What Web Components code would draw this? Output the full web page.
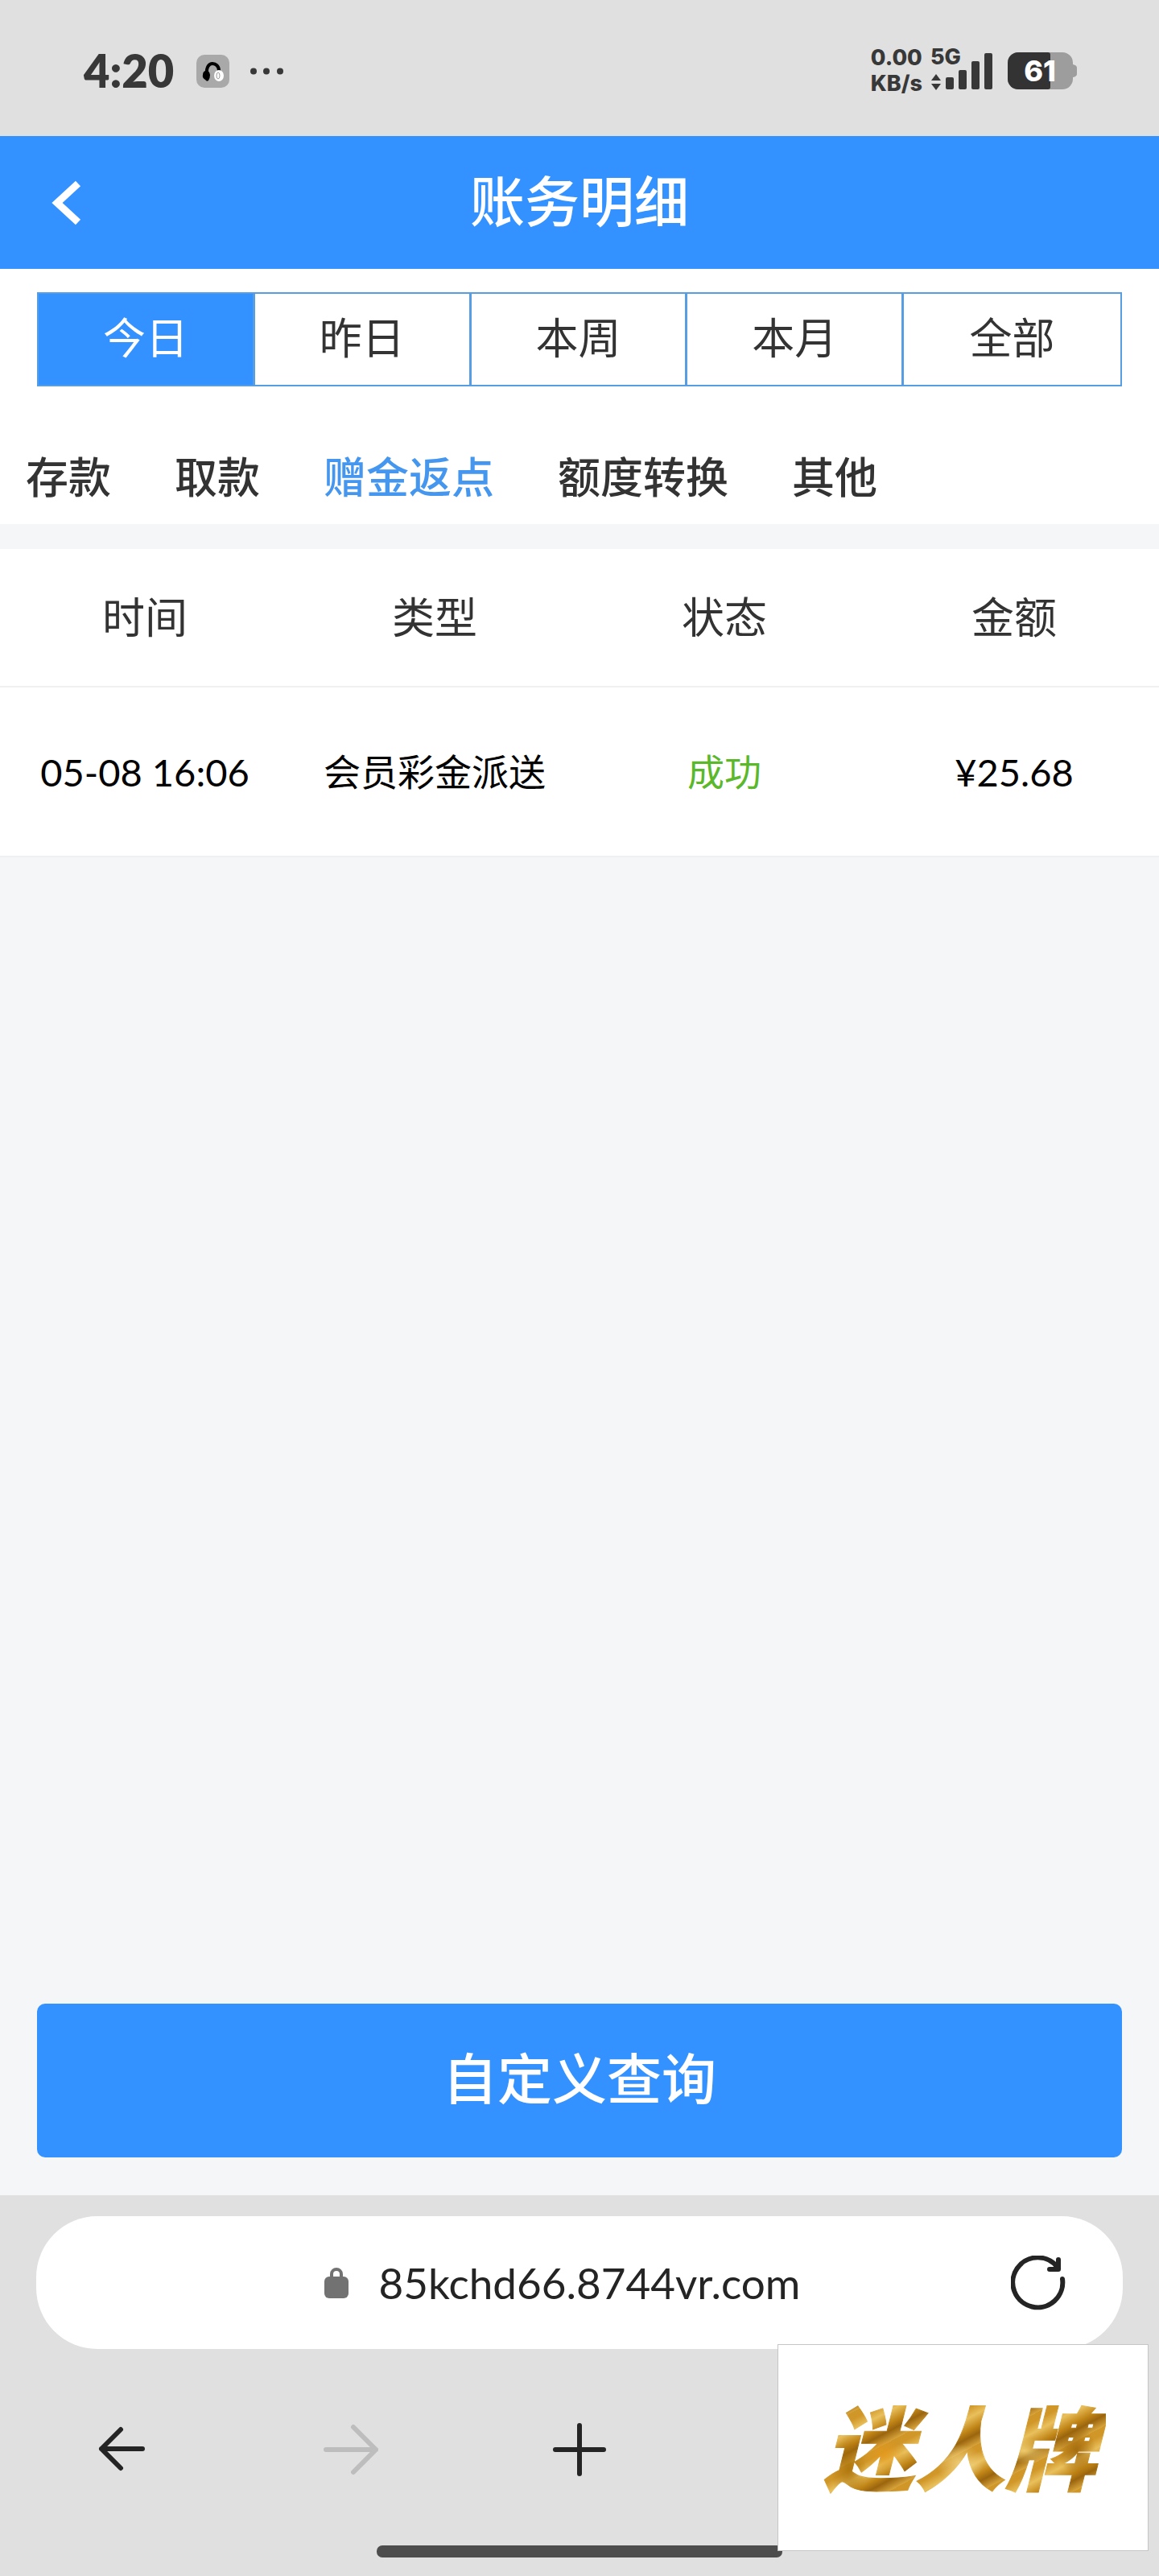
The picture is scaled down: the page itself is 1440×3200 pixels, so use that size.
<!DOCTYPE html>
<html lang="zh-CN">
<head>
<meta charset="utf-8">
<meta name="viewport" content="width=device-width, initial-scale=1">
<title>账务明细</title>
<style>
  :root {
    --blue: #3392ff;
    --ink: #333;
    --chrome: #e0e0e0;
    --canvas: #f4f6f8;
    --gutter: 46px;
  }
  html, body { height: 100%; }
  body {
    margin: 0;
    background: var(--canvas);
    color: var(--ink);
    font-family: Lato, "Noto Sans CJK SC", sans-serif;
  }
</style>
</head>
<body>
<account-app></account-app>

<script>
const define = (name, html, setup) => {
  const template = document.createElement('template');
  template.innerHTML = `<style>
    *, *::before, *::after { box-sizing: border-box; }
    button { margin: 0; padding: 0; border: 0; background: none; color: inherit; font: inherit; cursor: pointer; }
    svg { display: block; }
  </style>` + html;
  customElements.define(name, class extends HTMLElement {
    constructor() {
      super();
      this.attachShadow({ mode: 'open' }).append(template.content.cloneNode(true));
    }
    connectedCallback() { if (setup) setup(this.shadowRoot, this); }
  });
};

/* Moves the pressed state to whichever button of a group was tapped. */
const singleChoice = root => {
  const buttons = [...root.querySelectorAll('button')];
  buttons.forEach(b => b.addEventListener('click', () =>
    buttons.forEach(o => o.setAttribute('aria-pressed', String(o === b)))));
};

define('battery-level', `
  <style>
    :host { display: block; position: relative; width: 86px; height: 46px; }
    span { position: absolute; inset: 0 6px 0 0; color: #fff; font-family: Inter, sans-serif; font-size: 36px; line-height: 46px; font-weight: 800; text-align: center; }
  </style>
  <svg width="86" height="46" viewBox="0 0 86 46" aria-hidden="true">
    <path d="M13 0H68A13 13 0 0 1 81 13V15Q86 16 86 19V27Q86 30 81 31V33A13 13 0 0 1 68 46H13A13 13 0 0 1 0 33V13A13 13 0 0 1 13 0Z" fill="#9d9d9d"/>
    <path d="M13 0H50Q53 0 53 3V43Q53 46 50 46H13A13 13 0 0 1 0 33V13A13 13 0 0 1 13 0Z" fill="#333"/>
  </svg>
  <span><slot></slot></span>`);

define('signal-strength', `
  <style>
    :host { display: block; position: relative; width: 77px; height: 46px; }
    span { position: absolute; left: 0; top: -10px; font-family: Inter, sans-serif; font-size: 27px; line-height: 32px; font-weight: 800; }
  </style>
  <svg width="77" height="48" viewBox="0 0 77 48" fill="#383838" aria-hidden="true">
    <path d="M7 27L13 35H1ZM1 39H13L7 47Z"/>
    <rect x="19" y="31" width="10" height="15" rx="2"/>
    <rect x="35" y="22" width="10" height="24" rx="2"/>
    <rect x="51" y="11" width="10" height="35" rx="2"/>
    <rect x="67" y="1" width="10" height="45" rx="2"/>
  </svg>
  <span><slot></slot></span>`);

define('status-bar', `
  <style>
    :host { display: flex; align-items: center; justify-content: space-between; height: 169px; padding: 7px 102px 0 104px; background: var(--chrome); color: #383838; }
    div { display: flex; align-items: center; }
    time { font-size: 56px; line-height: 64px; font-weight: 800; margin-right: 28px; }
    .dots { margin-left: 26px; }
    .speed { margin-right: 10px; font-family: Inter, sans-serif; font-size: 27px; line-height: 32px; font-weight: 800; }
    battery-level { margin-left: 19px; }
  </style>
  <div>
    <time>4:20</time>
    <svg width="41" height="41" viewBox="0 0 41 41" aria-hidden="true">
      <rect width="41" height="41" rx="10" fill="#a9a9a9"/>
      <path d="M13 24C12 15 16 11 20 11S28 14 28 20" fill="none" stroke="#000" stroke-width="4"/>
      <path d="M11 20Q16 19 17 25Q17 29 15 32Q13 34 11 31Q7 29 8 25Q8 21 11 20Z"/>
      <ellipse cx="28" cy="26" rx="6" ry="7" fill="#fff"/>
      <ellipse cx="27" cy="26" rx="2" ry="4" fill="none" stroke="#999"/>
    </svg>
    <svg class="dots" width="42" height="9" viewBox="0 0 42 9" fill="#383838" aria-hidden="true">
      <circle cx="4" cy="4.500" r="4"/><circle cx="20" cy="4.500" r="4"/><circle cx="37" cy="4.500" r="4"/>
    </svg>
  </div>
  <div>
    <div class="speed">0.00<br>KB/s</div>
    <signal-strength>5G</signal-strength>
    <battery-level>61</battery-level>
  </div>`);

define('page-header', `
  <style>
    :host { display: grid; grid-template-columns: 1fr auto 1fr; align-items: center; height: 165px; background: var(--blue); color: #fff; }
    button { justify-self: start; padding: 20px 60px; }
    h1 { margin: 0; padding-bottom: 4px; font-size: 68px; line-height: 96px; font-weight: 500; }
  </style>
  <button aria-label="返回"><svg width="44" height="60" viewBox="0 0 44 60"><path d="M37 6L11 30L37 54" fill="none" stroke="#fff" stroke-width="9"/></svg></button>
  <h1><slot></slot></h1>`);

define('period-tabs', `
  <style>
    :host { display: block; padding: 29px var(--gutter) 0; background: #fff; }
    div { display: grid; grid-template-columns: repeat(5, 1fr); height: 117px; border: 2px solid #579de4; }
    button { font-size: 53px; line-height: 72px; padding-bottom: 4px; }
    button:not(:last-child) { border-right: 3px solid #579de4; }
    button[aria-pressed="true"] { background: var(--blue); color: #fff; }
  </style>
  <div role="group" aria-label="时间范围">
    <button aria-pressed="true">今日</button><button aria-pressed="false">昨日</button><button aria-pressed="false">本周</button><button aria-pressed="false">本月</button><button aria-pressed="false">全部</button>
  </div>`, singleChoice);

define('category-tabs', `
  <style>
    :host { display: block; background: #fff; }
    nav { display: flex; gap: 79px; align-items: center; height: 171px; padding: 54px 32px 0; }
    button { font-size: 53px; line-height: 72px; font-weight: 500; white-space: nowrap; }
    button[aria-pressed="true"] { color: #4496ee; }
  </style>
  <nav aria-label="类别">
    <button aria-pressed="false">存款</button><button aria-pressed="false">取款</button><button aria-pressed="true">赠金返点</button><button aria-pressed="false">额度转换</button><button aria-pressed="false">其他</button>
  </nav>`, singleChoice);

define('record-table', `
  <style>
    :host { display: block; margin-top: 31px; background: #fff; }
    table { width: 100%; border-collapse: separate; border-spacing: 0; table-layout: fixed; text-align: center; }
    th, td { padding: 0; border-bottom: 2px solid #eef0f2; }
    th { height: 172px; font-size: 53px; line-height: 72px; font-weight: 400; }
    td { height: 211px; font-size: 46px; line-height: 64px; color: #000; white-space: nowrap; }
    .num { font-size: 47px; }
    .ok { color: #5ab82a; }
  </style>
  <table>
    <thead><tr><th scope="col">时间</th><th scope="col">类型</th><th scope="col">状态</th><th scope="col">金额</th></tr></thead>
    <tbody><tr><td class="num">05-08 16:06</td><td>会员彩金派送</td><td class="ok">成功</td><td class="num">¥25.68</td></tr></tbody>
  </table>`);

define('query-button', `
  <style>
    :host { display: block; padding: 0 var(--gutter) 47px; }
    button { display: block; width: 100%; height: 191px; padding-bottom: 6px; border-radius: 10px; background: var(--blue); color: #fff; font-size: 68px; line-height: 96px; font-weight: 500; }
  </style>
  <button><slot></slot></button>`);

define('address-bar', `
  <style>
    :host { display: flex; align-items: center; height: 165px; padding: 0 71px 0 96px; border-radius: 76px; background: #fff; color: #242424; }
    .url { flex: 1; display: flex; align-items: center; justify-content: center; gap: 38px; font-size: 53px; line-height: 72px; }
  </style>
  <button class="url">
    <svg width="30" height="38" viewBox="0 0 30 38" aria-hidden="true"><path d="M9 14V8A6 6 0 0 1 21 8V14" fill="none" stroke="#727272" stroke-width="4"/><rect y="11" width="30" height="27" rx="6" fill="#727272"/></svg>
    <span><slot></slot></span>
  </button>
  <button aria-label="刷新">
    <svg width="68" height="68" viewBox="0 0 68 68" fill="none" stroke="#242424" stroke-width="6" stroke-linecap="round" stroke-linejoin="round"><path d="M64 29A31 31 0 1 1 59 16M59 5V17H48"/></svg>
  </button>`);

define('browser-bar', `
  <style>
    :host { display: block; padding: 26px 45px 23px; background: var(--chrome); }
    nav { display: grid; grid-template-columns: repeat(5, 1fr); place-items: center; height: 238px; margin: 6px -36px 0; }
    .home { width: 504px; height: 15px; margin: 0 auto; border-radius: 7px; background: #4d4d4d; }
    svg { fill: none; stroke: #242424; stroke-width: 6; stroke-linecap: round; stroke-linejoin: round; }
    :disabled svg { stroke: #bdbdbd; }
  </style>
  <address-bar><slot></slot></address-bar>
  <nav aria-label="浏览器导航">
    <button aria-label="后退"><svg width="68" height="68" viewBox="0 0 68 68"><path d="M60 33H9M33 9L9 33L33 57"/></svg></button>
    <button aria-label="前进" disabled><svg width="68" height="68" viewBox="0 0 68 68"><path d="M3 34H65M37 6L65 34L37 62"/></svg></button>
    <button aria-label="新建标签页"><svg width="68" height="68" viewBox="0 0 68 68"><path d="M4 34H64M34 4V64"/></svg></button>
  </nav>
  <div class="home"></div>`);

define('brand-badge', `
  <style>
    :host { position: absolute; right: 13px; bottom: 31px; display: flex; align-items: center; justify-content: center; box-sizing: border-box; width: 461px; height: 257px; border: 1px solid #c6c6c6; background: #fff; }
    span {
      padding: 0 12px; margin-right: 8px; font-size: 113px; line-height: 160px; font-weight: 900; font-style: italic; color: transparent;
      -webkit-text-stroke: 1px transparent;
      background:
        radial-gradient(ellipse 26px 20px at 24% 55%, #e69a1ccc, transparent),
        radial-gradient(ellipse 30px 24px at 50% 62%, #f5d98acc, transparent),
        radial-gradient(ellipse 34px 16px at 72% 52%, #f9dc82cc, transparent),
        radial-gradient(ellipse 24px 30px at 90% 52%, #9a6208cc, transparent),
        radial-gradient(ellipse 22px 40px at 12% 66%, #a8700acc, transparent),
        repeating-linear-gradient(152deg, #d09628 0 8px, #e9c05c 20px, #c08416 34px, #9a650e 42px, #d8a43c 54px);
      -webkit-background-clip: text; background-clip: text;
    }
  </style>
  <span><slot></slot></span>`);

define('account-app', `
  <style>
    :host { position: relative; display: flex; flex-direction: column; min-height: 100vh; }
    main { flex: 1; display: flex; flex-direction: column; }
    query-button { margin-top: auto; }
  </style>
  <status-bar></status-bar>
  <page-header>账务明细</page-header>
  <main>
    <period-tabs></period-tabs>
    <category-tabs></category-tabs>
    <record-table></record-table>
    <query-button>自定义查询</query-button>
  </main>
  <browser-bar>85kchd66.8744vr.com</browser-bar>
  <brand-badge>迷人牌</brand-badge>`);
</script>
</body>
</html>
